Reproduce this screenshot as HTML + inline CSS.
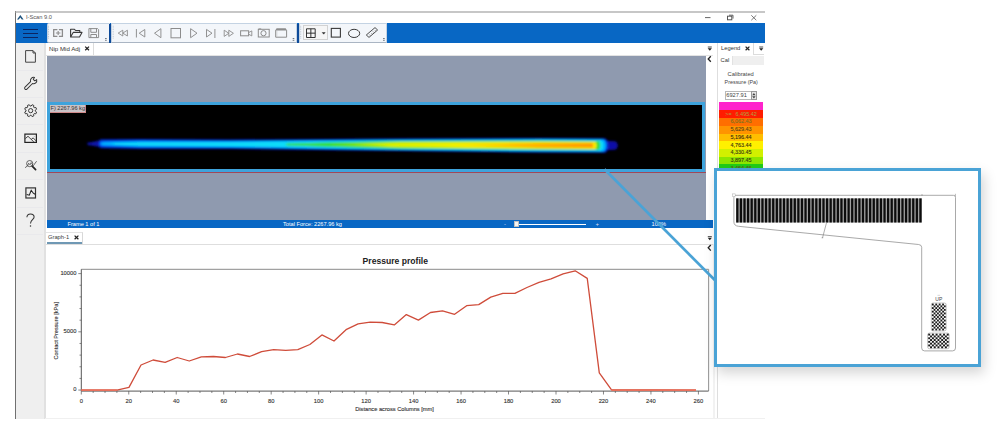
<!DOCTYPE html>
<html><head><meta charset="utf-8">
<style>
*{box-sizing:border-box;margin:0;padding:0}
html,body{width:1000px;height:437px;overflow:hidden;background:#fff}
body{position:relative;font-family:"Liberation Sans",sans-serif;color:#333}
.a{position:absolute}
.t{position:absolute;white-space:nowrap;line-height:1}
.k{-webkit-text-stroke:0.12px currentColor}
svg{position:absolute;overflow:visible}
</style></head><body>

<!-- window frame -->

<div class="a" style="left:15px;top:11px;width:1px;height:407.5px;background:#707070"></div>
<!-- title -->
<div class="t" style="left:26px;top:14.9px;font-size:5.7px;color:#555">I-Scan 9.0</div>
<!-- blue toolbar -->
<div class="a" style="left:16px;top:23px;width:749px;height:20px;background:#0867c4"></div>
<div class="a" style="left:23px;top:29px;width:14.5px;height:1.3px;background:#0b2460"></div>
<div class="a" style="left:23px;top:33px;width:14.5px;height:1.3px;background:#0b2460"></div>
<div class="a" style="left:23px;top:37px;width:14.5px;height:1.3px;background:#0b2460"></div>
<div class="a" style="left:46.5px;top:23px;width:63px;height:20px;background:#f3f6fa;border:1px solid #c4d3e3;border-bottom-color:#aab5c3;border-radius:2px 0 0 2px"></div>
<div class="a" style="left:111px;top:23px;width:186px;height:20px;background:#f3f6fa;border:1px solid #c4d3e3;border-bottom-color:#aab5c3"></div>
<div class="a" style="left:298.5px;top:23px;width:88px;height:20px;background:#f3f6fa;border:1px solid #c4d3e3;border-bottom-color:#aab5c3"></div>
<div class="a" style="left:303px;top:24.8px;width:24.5px;height:15.5px;background:#f6f6f6;border:1px solid #d2d2d2"></div>
<div class="a" style="left:109px;top:23.5px;width:2px;height:19px;background:#0c4a9a"></div>
<div class="a" style="left:297px;top:23.5px;width:2px;height:19px;background:#0c4a9a"></div>
<!-- left sidebar -->
<div class="a" style="left:16px;top:42.5px;width:28.5px;height:376px;background:#efefef"></div>
<div class="a" style="left:44px;top:42.5px;width:1.6px;height:376px;background:#e1e1e1"></div>
<div class="a" style="left:17px;top:69.7px;width:26px;height:1px;background:#e9e9ec"></div>
<div class="a" style="left:17px;top:97px;width:26px;height:1px;background:#e9e9ec"></div>
<div class="a" style="left:17px;top:124px;width:26px;height:1px;background:#e9e9ec"></div>
<div class="a" style="left:17px;top:152px;width:26px;height:1px;background:#e9e9ec"></div>
<div class="a" style="left:17px;top:179px;width:26px;height:1px;background:#e9e9ec"></div>
<div class="a" style="left:17px;top:207.4px;width:26px;height:1px;background:#e9e9ec"></div>
<div class="a" style="left:17px;top:233.8px;width:26px;height:1px;background:#e9e9ec"></div>

<div class="a" style="left:45.6px;top:42.5px;width:668px;height:13px;background:#fff"></div>
<div class="a" style="left:46px;top:54.8px;width:667px;height:1px;background:#e3e3e3"></div>
<div class="a" style="left:46px;top:43px;width:47.5px;height:12.3px;background:#fff;border-right:1px solid #dcdcdc"></div>
<div class="t" style="left:49px;top:45.5px;font-size:6.15px;color:#333">Nip Mid Adj</div>
<div class="a" style="left:46.6px;top:55.5px;width:659px;height:164px;background:#8f9aaf"></div>
<div class="a" style="left:47px;top:102px;width:657.5px;height:70.3px;border:3px solid #3ea3dc;background:#000"></div>
<div class="a" style="left:46.6px;top:172.3px;width:659px;height:0.8px;background:#a04858"></div>
<div class="a" style="left:50px;top:105.2px;width:36px;height:7.6px;background:#c9c2c6;border-bottom:1px solid #d08a8a;border-right:1px solid #d08a8a"></div>
<div class="t" style="left:50.5px;top:106.4px;font-size:5.6px;color:#333">F) 2267.96 kg</div>
<svg style="left:0;top:0" width="1000" height="437" viewBox="0 0 1000 437"><defs><filter id="bl" x="-5%" y="-100%" width="110%" height="300%"><feGaussianBlur stdDeviation="0.85"/></filter><linearGradient id="gG" x1="250" x2="600" y1="0" y2="0" gradientUnits="userSpaceOnUse"><stop offset="0" stop-color="#08dcf8"/><stop offset="0.2" stop-color="#40e8a0"/><stop offset="0.35" stop-color="#38e040"/><stop offset="1" stop-color="#30dc30"/></linearGradient><linearGradient id="gY" x1="335" x2="600" y1="0" y2="0" gradientUnits="userSpaceOnUse"><stop offset="0" stop-color="#60e030"/><stop offset="0.2" stop-color="#d8f000"/><stop offset="0.5" stop-color="#f4f000"/><stop offset="1" stop-color="#ffe800"/></linearGradient><linearGradient id="gO" x1="445" x2="600" y1="0" y2="0" gradientUnits="userSpaceOnUse"><stop offset="0" stop-color="#f4f000"/><stop offset="0.45" stop-color="#ffb800"/><stop offset="1" stop-color="#ff9400"/></linearGradient></defs><g filter="url(#bl)"><path d="M87.5 142.6 C92 142.2 97 141.5 101 139.6 L101 147.8 C97 146.2 92 145.6 87.5 145 Z" fill="#0a14a8"/><path d="M598.00 139.39 L606.00 140.82 L614.00 141.25 C619.00 141.25 619.00 149.85 614.00 149.85 L606.00 150.22 L598.00 151.59 C596.00 151.59 596.00 139.39 598.00 139.39Z" fill="#0c10a8"/><path d="M101.00 139.25 L140.00 138.88 L230.00 139.50 L400.00 138.50 L540.00 137.99 L604.00 138.21 C610.00 138.21 610.00 152.81 604.00 152.81 L540.00 152.59 L400.00 151.10 L230.00 148.90 L140.00 148.88 L101.00 148.25 C98.00 148.25 98.00 139.25 101.00 139.25Z" fill="#0a18b8"/><path d="M102.00 140.45 L140.00 140.08 L230.00 140.60 L400.00 139.30 L540.00 138.79 L603.00 139.01 C609.00 139.01 609.00 152.01 603.00 152.01 L540.00 151.79 L400.00 150.30 L230.00 147.80 L140.00 147.68 L102.00 147.05 C98.00 147.05 98.00 140.45 102.00 140.45Z" fill="#0050f0"/><path d="M105.00 142.26 L140.00 141.38 L230.00 141.50 L400.00 139.90 L540.00 139.29 L602.00 139.51 C607.00 139.51 607.00 151.51 602.00 151.51 L540.00 151.29 L400.00 149.70 L230.00 146.90 L140.00 146.38 L105.00 145.26 C99.00 145.26 99.00 142.26 105.00 142.26Z" fill="#00b8ff"/><path d="M118.00 143.11 L140.00 142.38 L230.00 142.30 L400.00 140.60 L540.00 139.99 L600.00 140.20 C604.00 140.20 604.00 150.80 600.00 150.80 L540.00 150.59 L400.00 149.00 L230.00 146.10 L140.00 145.38 L118.00 144.51 C110.00 144.51 110.00 143.11 118.00 143.11Z" fill="#10dcf8"/><path d="M290.00 143.41 L330.00 142.45 L400.00 140.90 L540.00 140.79 L598.00 140.99 C601.00 140.99 601.00 149.99 598.00 149.99 L540.00 149.79 L400.00 148.70 L330.00 146.65 L290.00 145.41 C284.00 145.41 284.00 143.41 290.00 143.41Z" fill="#38dc38"/><path d="M335.00 144.07 L400.00 142.30 L540.00 141.79 L595.00 141.98 C597.00 141.98 597.00 148.98 595.00 148.98 L540.00 148.79 L400.00 147.30 L335.00 145.07 C329.00 145.07 329.00 144.07 335.00 144.07Z" fill="url(#gY)"/><path d="M460.00 144.51 L540.00 143.19 L592.00 143.37 C593.50 143.37 593.50 147.57 592.00 147.57 L540.00 147.39 L460.00 145.51 C454.00 145.51 454.00 144.51 460.00 144.51Z" fill="url(#gO)"/></g></svg>

<div class="a" style="left:46.6px;top:219.5px;width:666px;height:8.5px;background:#0867c4"></div>
<div class="t" style="left:67.5px;top:221.8px;font-size:5.65px;color:#fff">Frame 1 of 1</div>
<div class="t" style="left:283px;top:221.8px;font-size:5.65px;color:#fff">Total Force: 2267.96 kg</div>
<div class="t" style="left:504px;top:220.5px;font-size:6px;color:#dde">-</div>
<div class="a" style="left:518px;top:223.5px;width:68px;height:1.4px;background:#fff"></div>
<div class="a" style="left:514px;top:220.6px;width:5px;height:6.5px;background:#f4f4f4;border:0.5px solid #c0c0c0"></div>
<div class="t" style="left:595.5px;top:220.5px;font-size:6px;color:#dde">+</div>
<div class="t" style="left:651.5px;top:221.8px;font-size:5.65px;color:#fff">100%</div>

<div class="a" style="left:46px;top:232px;width:36.5px;height:12px;background:#fff;border-right:1px solid #d8d8d8;border-top:1px solid #e4e4e4"></div>
<div class="a" style="left:46px;top:243.6px;width:667px;height:0.8px;background:#dedede"></div>
<div class="a" style="left:46.5px;top:242px;width:35.5px;height:1.6px;background:#6f98b4"></div>
<div class="t" style="left:48px;top:234.9px;font-size:5.75px;color:#3a3a3a">Graph-1</div>

<div class="a" style="left:713px;top:244px;width:1.5px;height:174.5px;background:#f2f2f2"></div>
<div class="a" style="left:716.5px;top:42.5px;width:1.2px;height:376px;background:#dedede"></div>
<div class="a" style="left:45px;top:418px;width:720px;height:1px;background:#f0f0f0"></div>
<div class="a" style="left:718px;top:43px;width:36px;height:12px;background:#fff;border-right:1px solid #dcdcdc"></div>
<div class="t" style="left:721px;top:45.5px;font-size:5.8px;color:#333">Legend</div>
<div class="a" style="left:732px;top:56px;width:32px;height:9px;background:#efefef;border-left:1px solid #e2e2e2"></div>
<div class="a" style="left:753px;top:54px;width:11px;height:1px;background:#dcdcdc"></div>
<div class="t" style="left:720.5px;top:57.5px;font-size:5.8px;color:#333">Cal</div>
<div class="t" style="left:727.6px;top:72.4px;font-size:5.75px;color:#444">Calibrated</div>
<div class="t" style="left:724.6px;top:80.4px;font-size:5.4px;color:#444">Pressure (Pa)</div>
<div class="a" style="left:724.8px;top:91px;width:32.5px;height:9.3px;background:#fff;border:0.8px solid #b8b8b8"></div>
<div class="t" style="left:726.3px;top:92.8px;font-size:5.7px;color:#444">6927.91</div>
<div class="a" style="left:750.8px;top:91.4px;width:6.2px;height:8.6px;background:#e4e4e4;border:0.7px solid #999"></div>
<div class="a" style="left:719px;top:102.40px;width:44px;height:7.85px;background:#ff24cc"></div>
<div class="a" style="left:719px;top:110.20px;width:44px;height:7.65px;background:#ff1c00"></div>
<div class="a" style="left:719px;top:117.80px;width:44px;height:7.95px;background:#ff6e00"></div>
<div class="t k" style="left:719px;width:44px;text-align:center;top:119.15px;font-size:5.45px;color:#7a7420">6,062.43</div>
<div class="a" style="left:719px;top:125.70px;width:44px;height:7.95px;background:#ff9400"></div>
<div class="t k" style="left:719px;width:44px;text-align:center;top:127.05px;font-size:5.45px;color:#5a4418">5,629.43</div>
<div class="a" style="left:719px;top:133.60px;width:44px;height:7.85px;background:#ffbe00"></div>
<div class="t k" style="left:719px;width:44px;text-align:center;top:134.90px;font-size:5.45px;color:#3e3010">5,196.44</div>
<div class="a" style="left:719px;top:141.40px;width:44px;height:7.55px;background:#fff000"></div>
<div class="t k" style="left:719px;width:44px;text-align:center;top:142.55px;font-size:5.45px;color:#3a3410">4,763.44</div>
<div class="a" style="left:719px;top:148.90px;width:44px;height:7.95px;background:#d2f000"></div>
<div class="t k" style="left:719px;width:44px;text-align:center;top:150.25px;font-size:5.45px;color:#3a3a10">4,330.45</div>
<div class="a" style="left:719px;top:156.80px;width:44px;height:7.65px;background:#8ee600"></div>
<div class="t k" style="left:719px;width:44px;text-align:center;top:158.00px;font-size:5.45px;color:#3a3a10">3,897.45</div>
<div class="a" style="left:719px;top:164.40px;width:44px;height:7.85px;background:#20cc18"></div>
<div class="t k" style="left:719px;width:44px;text-align:center;top:165.70px;font-size:5.45px;color:#6a5020">3,464.46</div>
<div class="t" style="left:725.3px;top:112px;font-size:5.45px;color:#b0a040">&gt;=</div>
<div class="t" style="left:735.6px;top:112px;font-size:5.45px;color:#b0a040">6,495.42</div>
<svg style="left:0;top:0" width="1000" height="437" viewBox="0 0 1000 437"><rect x="15" y="11.4" width="750" height="1.2" fill="#a2a2a2"/><path d="M17 19.6 L20.3 15 L23.6 19.6 L21.8 19.6 L20.3 17.5 L18.8 19.6Z" fill="#1d527d"/><path d="M705 17.6 H710.5" stroke="#555" stroke-width="0.9"/><rect x="727.5" y="16.2" width="4.3" height="3.6" fill="none" stroke="#555" stroke-width="1"/><path d="M729 15.2 H733 V18.6" fill="none" stroke="#555" stroke-width="0.9"/><path d="M751.3 15.3 L756.3 20.2 M756.3 15.3 L751.3 20.2" stroke="#555" stroke-width="0.8"/><path d="M48.5 25.8 V38.8" stroke="#9aa6b4" stroke-width="0.7" stroke-dasharray="0.8 0.9"/><path d="M113.2 25.8 V38.8" stroke="#9aa6b4" stroke-width="0.7" stroke-dasharray="0.8 0.9"/><path d="M300.7 25.8 V38.8" stroke="#9aa6b4" stroke-width="0.7" stroke-dasharray="0.8 0.9"/><path d="M105.1 38.5 h1.6 M105.1 40.3 h1.6" stroke="#5a6472" stroke-width="0.9"/><path d="M292.7 38.5 h1.6 M292.7 40.3 h1.6" stroke="#5a6472" stroke-width="0.9"/><path d="M383.1 38.5 h1.6 M383.1 40.3 h1.6" stroke="#5a6472" stroke-width="0.9"/><path d="M57.4 29.7 H53.7 V36.3 H57.4 M58.9 29.7 H62.4 V36.3 H58.9" stroke="#8c8c8c" stroke-width="1.3" fill="none"/><path d="M55.9 33 H60.4 M58.15 30.9 V35.1" stroke="#8c8c8c" stroke-width="1.1" fill="none"/><path d="M70.6 37 V29.3 H74.5 L75.6 30.5 H79.8 V32.3 M70.6 37 L73.2 32.4 H82 L79.5 37 Z" fill="none" stroke="#3a3a3a" stroke-width="1.1" stroke-linejoin="round"/><path d="M88.9 28.6 H97.6 L98.6 29.6 V37.6 H88.9 Z M90.8 28.6 V32.3 H96.5 V28.6 M90.8 37.6 V34.5 H96.5 V37.6" fill="none" stroke="#8c8c8c" stroke-width="1"/><path d="M118.2 33.1 L122.8 30.2 V36 Z M122.8 33.1 L127.4 30.2 V36 Z" fill="none" stroke="#8c8c8c" stroke-width="0.9" stroke-linejoin="round"/><path d="M136.4 29 V37.5 M144.8 29.5 L139.2 33.2 L144.8 37 Z" fill="none" stroke="#8c8c8c" stroke-width="0.95"/><path d="M160.9 28.7 L154.5 33.2 L160.9 37.7 Z" fill="none" stroke="#8c8c8c" stroke-width="0.95"/><rect x="171" y="28.5" width="9.5" height="9.3" fill="none" stroke="#8c8c8c" stroke-width="1"/><path d="M190.6 28.7 L197 33.2 L190.6 37.7 Z" fill="none" stroke="#8c8c8c" stroke-width="0.95"/><path d="M206.5 29.4 L212 33.2 L206.5 37 Z M214.9 29 V38" fill="none" stroke="#8c8c8c" stroke-width="0.95"/><path d="M224.2 30.2 L228.8 33.3 L224.2 36.4 Z M228.8 30.2 L233.4 33.3 L228.8 36.4 Z" fill="none" stroke="#8c8c8c" stroke-width="0.9" stroke-linejoin="round"/><rect x="240.6" y="30.8" width="8" height="5" fill="none" stroke="#8c8c8c" stroke-width="1"/><path d="M248.6 32.6 L251.8 30.9 V35.9 L248.6 34.2" fill="none" stroke="#8c8c8c" stroke-width="0.9"/><rect x="258.3" y="29.3" width="10.9" height="7.7" fill="none" stroke="#8c8c8c" stroke-width="1"/><circle cx="263.5" cy="33.2" r="2.6" fill="none" stroke="#8c8c8c" stroke-width="1"/><path d="M258.6 28.8 H261.2" stroke="#8c8c8c" stroke-width="0.8"/><path d="M275.7 37.2 V30.2 M286.6 37.2 V30.2 M275.7 37.2 H286.6" fill="none" stroke="#8c8c8c" stroke-width="1"/><path d="M275.2 30.6 L276.6 28.2 H285.6 L287.1 30.6 Z" fill="#8c8c8c"/><path d="M276.9 31 V36.6" stroke="#c8c8c8" stroke-width="0.6"/><path d="M306.5 28.8 H315.2 V37.5 H306.5 Z M310.85 28.8 V37.5 M306.5 33.15 H315.2" fill="none" stroke="#2a2a2a" stroke-width="0.95"/><path d="M322.2 32.5 L323.7 34.2 L325.2 32.5 Z" fill="#222" stroke="#222" stroke-width="0.4" stroke-linejoin="round"/><rect x="331.3" y="28.4" width="9.1" height="8.7" fill="none" stroke="#3a3a3a" stroke-width="1.1"/><ellipse cx="354.1" cy="33.4" rx="5.6" ry="4.1" fill="none" stroke="#3a3a3a" stroke-width="1"/><path d="M366.3 35 L375 27.6 L377.6 30 L369 37.4 Z" fill="none" stroke="#3a3a3a" stroke-width="0.9" stroke-linejoin="round"/><path d="M369.4 34.6 l0.9 1 M371.3 33 l0.6 0.7 M373 31.5 l0.9 1 M374.8 30 l0.6 0.7" stroke="#3a3a3a" stroke-width="0.6"/><path d="M25.6 50.6 H33 L35.4 53 V62.2 H25.6 Z M33 50.6 V53 H35.4" fill="none" stroke="#444" stroke-width="1"/><g transform="translate(33.6,80.5) rotate(-45)"><path d="M-10.8 -1.35 L-2.9 -1.35 A3.25 3.25 0 0 1 2.85 -1.5 L0.6 -1.1 L0.6 1.1 L2.85 1.5 A3.25 3.25 0 0 1 -2.9 1.35 L-10.8 1.35 A1.35 1.35 0 0 1 -10.8 -1.35 Z" fill="none" stroke="#333" stroke-width="0.95" stroke-linejoin="round"/></g><path d="M35.23 111.09 L36.58 112.07 L35.85 113.84 L34.20 113.58 L33.58 114.20 L33.84 115.85 L32.07 116.58 L31.09 115.23 L30.21 115.23 L29.23 116.58 L27.46 115.85 L27.72 114.20 L27.10 113.58 L25.45 113.84 L24.72 112.07 L26.07 111.09 L26.07 110.21 L24.72 109.23 L25.45 107.46 L27.10 107.72 L27.72 107.10 L27.46 105.45 L29.23 104.72 L30.21 106.07 L31.09 106.07 L32.07 104.72 L33.84 105.45 L33.58 107.10 L34.20 107.72 L35.85 107.46 L36.58 109.23 L35.23 110.21Z" fill="none" stroke="#333" stroke-width="0.95" stroke-linejoin="round"/><circle cx="30.65" cy="110.65" r="2.1" fill="none" stroke="#333" stroke-width="0.95"/><rect x="24.9" y="134.1" width="11.5" height="8.3" fill="none" stroke="#222" stroke-width="1.2"/><path d="M25.3 138.6 L28 136.3 L33.8 141.9 M31.2 139.4 L33.2 137.9 L36.1 140.9" fill="none" stroke="#333" stroke-width="0.9"/><circle cx="34.2" cy="136.3" r="0.4" fill="#666"/><circle cx="29.7" cy="163.6" r="3.1" fill="none" stroke="#555" stroke-width="0.9"/><path d="M32.2 166.2 L35.6 169.6" stroke="#222" stroke-width="1.7" stroke-linecap="round"/><path d="M25.1 167.7 L27.6 165.8 L28.6 163.2 L30 164.8 L31.2 162.6 L33.3 165.7 L36.6 161.2" fill="none" stroke="#444" stroke-width="0.8"/><rect x="25.9" y="187.9" width="9.6" height="10.1" fill="none" stroke="#333" stroke-width="1.2"/><path d="M26.7 194.4 L29.3 195.2 L31.2 190.3 L33.3 193.2 L35.2 194.3" fill="none" stroke="#222" stroke-width="1.05"/><path d="M26.9 217.3 C27 215 28.5 214 30.5 214 C32.6 214 34.1 215.2 34.1 217.1 C34.1 219.6 30.5 220 30.5 223.4" fill="none" stroke="#333" stroke-width="1.05"/><circle cx="30.5" cy="226" r="0.75" fill="#333"/><path d="M85.2 46.6 l3.8 3.6 M89.0 46.6 l-3.8 3.6" stroke="#222" stroke-width="1.25"/><path d="M74.6 235.6 l3.8 3.6 M78.39999999999999 235.6 l-3.8 3.6" stroke="#222" stroke-width="1.25"/><path d="M745.6 46.6 l3.8 3.6 M749.4 46.6 l-3.8 3.6" stroke="#222" stroke-width="1.25"/><path d="M707.8 47.0 h4" stroke="#222" stroke-width="0.8"/><path d="M707.6999999999999 48.2 L711.9 48.2 L709.8 50.7Z" fill="#222"/><path d="M759.2 47.0 h4" stroke="#222" stroke-width="0.8"/><path d="M759.1 48.2 L763.3000000000001 48.2 L761.2 50.7Z" fill="#222"/><path d="M707.8 236.6 h4" stroke="#222" stroke-width="0.8"/><path d="M707.6999999999999 237.79999999999998 L711.9 237.79999999999998 L709.8 240.29999999999998Z" fill="#222"/><path d="M710.8 56.2 L708.1999999999999 59.0 L710.8 61.8" fill="none" stroke="#222" stroke-width="1.3"/><path d="M710.8 245.0 L708.1999999999999 247.8 L710.8 250.60000000000002" fill="none" stroke="#222" stroke-width="1.3"/><path d="M752.2 95.2 L753.9 93 L755.6 95.2Z M752.2 96.2 L753.9 98.4 L755.6 96.2Z" fill="#444"/><path d="M81.3 269.3 H708.6" stroke="#8a8a8a" stroke-width="1" fill="none"/><path d="M708.6 269.3 V391.1" stroke="#9a9a9a" stroke-width="1.1" fill="none"/><path d="M81.3 269.3 V391.1 M81.3 391.1 H708.6" stroke="#444" stroke-width="0.9"/><path d="M78.30 390.05 H81.3" stroke="#555" stroke-width="0.7"/><path d="M79.50 378.41 H81.3" stroke="#555" stroke-width="0.7"/><path d="M79.50 366.76 H81.3" stroke="#555" stroke-width="0.7"/><path d="M79.50 355.12 H81.3" stroke="#555" stroke-width="0.7"/><path d="M79.50 343.47 H81.3" stroke="#555" stroke-width="0.7"/><path d="M78.30 331.82 H81.3" stroke="#555" stroke-width="0.7"/><path d="M79.50 320.18 H81.3" stroke="#555" stroke-width="0.7"/><path d="M79.50 308.54 H81.3" stroke="#555" stroke-width="0.7"/><path d="M79.50 296.89 H81.3" stroke="#555" stroke-width="0.7"/><path d="M79.50 285.25 H81.3" stroke="#555" stroke-width="0.7"/><path d="M78.30 273.60 H81.3" stroke="#555" stroke-width="0.7"/><path d="M81.30 391.1 V394.50" stroke="#555" stroke-width="0.7"/><path d="M93.17 391.1 V393.00" stroke="#555" stroke-width="0.7"/><path d="M105.03 391.1 V393.00" stroke="#555" stroke-width="0.7"/><path d="M116.90 391.1 V393.00" stroke="#555" stroke-width="0.7"/><path d="M128.77 391.1 V394.50" stroke="#555" stroke-width="0.7"/><path d="M140.64 391.1 V393.00" stroke="#555" stroke-width="0.7"/><path d="M152.50 391.1 V393.00" stroke="#555" stroke-width="0.7"/><path d="M164.37 391.1 V393.00" stroke="#555" stroke-width="0.7"/><path d="M176.24 391.1 V394.50" stroke="#555" stroke-width="0.7"/><path d="M188.11 391.1 V393.00" stroke="#555" stroke-width="0.7"/><path d="M199.97 391.1 V393.00" stroke="#555" stroke-width="0.7"/><path d="M211.84 391.1 V393.00" stroke="#555" stroke-width="0.7"/><path d="M223.71 391.1 V394.50" stroke="#555" stroke-width="0.7"/><path d="M235.58 391.1 V393.00" stroke="#555" stroke-width="0.7"/><path d="M247.44 391.1 V393.00" stroke="#555" stroke-width="0.7"/><path d="M259.31 391.1 V393.00" stroke="#555" stroke-width="0.7"/><path d="M271.18 391.1 V394.50" stroke="#555" stroke-width="0.7"/><path d="M283.05 391.1 V393.00" stroke="#555" stroke-width="0.7"/><path d="M294.92 391.1 V393.00" stroke="#555" stroke-width="0.7"/><path d="M306.78 391.1 V393.00" stroke="#555" stroke-width="0.7"/><path d="M318.65 391.1 V394.50" stroke="#555" stroke-width="0.7"/><path d="M330.52 391.1 V393.00" stroke="#555" stroke-width="0.7"/><path d="M342.38 391.1 V393.00" stroke="#555" stroke-width="0.7"/><path d="M354.25 391.1 V393.00" stroke="#555" stroke-width="0.7"/><path d="M366.12 391.1 V394.50" stroke="#555" stroke-width="0.7"/><path d="M377.99 391.1 V393.00" stroke="#555" stroke-width="0.7"/><path d="M389.86 391.1 V393.00" stroke="#555" stroke-width="0.7"/><path d="M401.72 391.1 V393.00" stroke="#555" stroke-width="0.7"/><path d="M413.59 391.1 V394.50" stroke="#555" stroke-width="0.7"/><path d="M425.46 391.1 V393.00" stroke="#555" stroke-width="0.7"/><path d="M437.32 391.1 V393.00" stroke="#555" stroke-width="0.7"/><path d="M449.19 391.1 V393.00" stroke="#555" stroke-width="0.7"/><path d="M461.06 391.1 V394.50" stroke="#555" stroke-width="0.7"/><path d="M472.93 391.1 V393.00" stroke="#555" stroke-width="0.7"/><path d="M484.80 391.1 V393.00" stroke="#555" stroke-width="0.7"/><path d="M496.66 391.1 V393.00" stroke="#555" stroke-width="0.7"/><path d="M508.53 391.1 V394.50" stroke="#555" stroke-width="0.7"/><path d="M520.40 391.1 V393.00" stroke="#555" stroke-width="0.7"/><path d="M532.26 391.1 V393.00" stroke="#555" stroke-width="0.7"/><path d="M544.13 391.1 V393.00" stroke="#555" stroke-width="0.7"/><path d="M556.00 391.1 V394.50" stroke="#555" stroke-width="0.7"/><path d="M567.87 391.1 V393.00" stroke="#555" stroke-width="0.7"/><path d="M579.74 391.1 V393.00" stroke="#555" stroke-width="0.7"/><path d="M591.60 391.1 V393.00" stroke="#555" stroke-width="0.7"/><path d="M603.47 391.1 V394.50" stroke="#555" stroke-width="0.7"/><path d="M615.34 391.1 V393.00" stroke="#555" stroke-width="0.7"/><path d="M627.20 391.1 V393.00" stroke="#555" stroke-width="0.7"/><path d="M639.07 391.1 V393.00" stroke="#555" stroke-width="0.7"/><path d="M650.94 391.1 V394.50" stroke="#555" stroke-width="0.7"/><path d="M662.81 391.1 V393.00" stroke="#555" stroke-width="0.7"/><path d="M674.67 391.1 V393.00" stroke="#555" stroke-width="0.7"/><path d="M686.54 391.1 V393.00" stroke="#555" stroke-width="0.7"/><path d="M698.41 391.1 V394.50" stroke="#555" stroke-width="0.7"/><path d="M81.30 390.05 L116.90 390.05 L128.96 387.40 L141.02 365.00 L153.08 360.00 L165.14 362.30 L177.20 357.50 L189.26 361.00 L201.32 356.80 L213.38 356.50 L225.44 357.50 L237.50 354.00 L249.56 356.50 L261.62 351.70 L273.68 349.60 L285.74 350.30 L297.80 349.60 L309.86 344.50 L321.92 334.90 L333.98 341.00 L346.04 329.70 L358.10 323.90 L370.16 322.20 L382.22 322.50 L394.28 324.90 L406.34 314.60 L418.40 320.10 L430.46 312.50 L442.52 310.80 L454.58 314.30 L466.64 305.70 L478.70 304.60 L490.76 297.10 L502.82 293.30 L514.88 293.30 L526.94 287.50 L539.00 282.30 L551.06 278.90 L563.12 273.80 L575.18 270.80 L587.24 278.40 L599.30 372.90 L611.36 389.70 L696.00 390.05" fill="none" stroke="#cf4c3a" stroke-width="1.3" stroke-linejoin="round"/><path d="M81.3 390.1 H116.9 M611.4 390.1 H696" stroke="#e8705c" stroke-width="1.9"/></svg>
<div class="t" style="left:362.6px;top:257px;font-size:8.6px;font-weight:bold;color:#222">Pressure profile</div>
<div class="t k" style="left:40px;width:36.5px;text-align:right;top:387.45px;font-size:5.8px;color:#333">0</div>
<div class="t k" style="left:40px;width:36.5px;text-align:right;top:329.22px;font-size:5.8px;color:#333">5000</div>
<div class="t k" style="left:40px;width:36.5px;text-align:right;top:271.00px;font-size:5.8px;color:#333">10000</div>
<div class="t k" style="left:66.30px;width:30px;text-align:center;top:398.8px;font-size:5.8px;color:#333">0</div>
<div class="t k" style="left:113.77px;width:30px;text-align:center;top:398.8px;font-size:5.8px;color:#333">20</div>
<div class="t k" style="left:161.24px;width:30px;text-align:center;top:398.8px;font-size:5.8px;color:#333">40</div>
<div class="t k" style="left:208.71px;width:30px;text-align:center;top:398.8px;font-size:5.8px;color:#333">60</div>
<div class="t k" style="left:256.18px;width:30px;text-align:center;top:398.8px;font-size:5.8px;color:#333">80</div>
<div class="t k" style="left:303.65px;width:30px;text-align:center;top:398.8px;font-size:5.8px;color:#333">100</div>
<div class="t k" style="left:351.12px;width:30px;text-align:center;top:398.8px;font-size:5.8px;color:#333">120</div>
<div class="t k" style="left:398.59px;width:30px;text-align:center;top:398.8px;font-size:5.8px;color:#333">140</div>
<div class="t k" style="left:446.06px;width:30px;text-align:center;top:398.8px;font-size:5.8px;color:#333">160</div>
<div class="t k" style="left:493.53px;width:30px;text-align:center;top:398.8px;font-size:5.8px;color:#333">180</div>
<div class="t k" style="left:541.00px;width:30px;text-align:center;top:398.8px;font-size:5.8px;color:#333">200</div>
<div class="t k" style="left:588.47px;width:30px;text-align:center;top:398.8px;font-size:5.8px;color:#333">220</div>
<div class="t k" style="left:635.94px;width:30px;text-align:center;top:398.8px;font-size:5.8px;color:#333">240</div>
<div class="t k" style="left:683.41px;width:30px;text-align:center;top:398.8px;font-size:5.8px;color:#333">260</div>
<div class="t k" style="left:355.2px;top:406.7px;font-size:5.7px;color:#333">Distance across Columns [mm]</div>
<div class="t k" style="left:28px;top:327.5px;width:58px;text-align:center;font-size:5.6px;color:#333;transform:rotate(-90deg);transform-origin:29px 2.8px">Contact Pressure [kPa]</div>
<svg style="left:0;top:0" width="1000" height="437" viewBox="0 0 1000 437"><path d="M604.5 169.3 L715 280.3" stroke="#4aa3d6" stroke-width="2.7"/></svg>
<div class="a" style="left:714px;top:168px;width:267px;height:198.5px;background:#fff;border:3px solid #4aa3d6;box-shadow:3px 6px 12px rgba(0,0,0,0.17)"></div>
<svg style="left:0;top:0" width="1000" height="437" viewBox="0 0 1000 437"><path d="M736 195.3 H953.4 Q955.5 195.3 955.5 197.4 V348 Q955.5 350.9 952.6 350.9 H924.6 Q921.7 350.9 921.7 348 V247.3 Q921.7 244.8 918.6 244.5 L738.5 226.3 Q733.9 225.8 733.9 222 V197.4 Q733.9 195.3 736 195.3 Z" fill="none" stroke="#8c8c8c" stroke-width="0.75"/><rect x="732.6" y="193.9" width="2.6" height="2.6" fill="#fff" stroke="#aaa" stroke-width="0.5"/><path d="M922 194 V196 M955.4 193.8 V196.5" stroke="#888" stroke-width="0.6"/><rect x="736.2" y="198.4" width="185.8" height="24.1" fill="#a0a0a0"/><rect x="736.20" y="198.4" width="2.25" height="24.1" fill="#0c0c0c"/><rect x="739.79" y="198.4" width="2.25" height="24.1" fill="#0c0c0c"/><rect x="743.38" y="198.4" width="2.25" height="24.1" fill="#0c0c0c"/><rect x="746.97" y="198.4" width="2.25" height="24.1" fill="#0c0c0c"/><rect x="750.56" y="198.4" width="2.25" height="24.1" fill="#0c0c0c"/><rect x="754.15" y="198.4" width="2.25" height="24.1" fill="#0c0c0c"/><rect x="757.74" y="198.4" width="2.25" height="24.1" fill="#0c0c0c"/><rect x="761.33" y="198.4" width="2.25" height="24.1" fill="#0c0c0c"/><rect x="764.92" y="198.4" width="2.25" height="24.1" fill="#0c0c0c"/><rect x="768.51" y="198.4" width="2.25" height="24.1" fill="#0c0c0c"/><rect x="772.10" y="198.4" width="2.25" height="24.1" fill="#0c0c0c"/><rect x="775.69" y="198.4" width="2.25" height="24.1" fill="#0c0c0c"/><rect x="779.28" y="198.4" width="2.25" height="24.1" fill="#0c0c0c"/><rect x="782.88" y="198.4" width="2.25" height="24.1" fill="#0c0c0c"/><rect x="786.47" y="198.4" width="2.25" height="24.1" fill="#0c0c0c"/><rect x="790.06" y="198.4" width="2.25" height="24.1" fill="#0c0c0c"/><rect x="793.65" y="198.4" width="2.25" height="24.1" fill="#0c0c0c"/><rect x="797.24" y="198.4" width="2.25" height="24.1" fill="#0c0c0c"/><rect x="800.83" y="198.4" width="2.25" height="24.1" fill="#0c0c0c"/><rect x="804.42" y="198.4" width="2.25" height="24.1" fill="#0c0c0c"/><rect x="808.01" y="198.4" width="2.25" height="24.1" fill="#0c0c0c"/><rect x="811.60" y="198.4" width="2.25" height="24.1" fill="#0c0c0c"/><rect x="815.19" y="198.4" width="2.25" height="24.1" fill="#0c0c0c"/><rect x="818.78" y="198.4" width="2.25" height="24.1" fill="#0c0c0c"/><rect x="822.37" y="198.4" width="2.25" height="24.1" fill="#0c0c0c"/><rect x="825.96" y="198.4" width="2.25" height="24.1" fill="#0c0c0c"/><rect x="829.55" y="198.4" width="2.25" height="24.1" fill="#0c0c0c"/><rect x="833.14" y="198.4" width="2.25" height="24.1" fill="#0c0c0c"/><rect x="836.73" y="198.4" width="2.25" height="24.1" fill="#0c0c0c"/><rect x="840.32" y="198.4" width="2.25" height="24.1" fill="#0c0c0c"/><rect x="843.91" y="198.4" width="2.25" height="24.1" fill="#0c0c0c"/><rect x="847.50" y="198.4" width="2.25" height="24.1" fill="#0c0c0c"/><rect x="851.09" y="198.4" width="2.25" height="24.1" fill="#0c0c0c"/><rect x="854.68" y="198.4" width="2.25" height="24.1" fill="#0c0c0c"/><rect x="858.27" y="198.4" width="2.25" height="24.1" fill="#0c0c0c"/><rect x="861.86" y="198.4" width="2.25" height="24.1" fill="#0c0c0c"/><rect x="865.45" y="198.4" width="2.25" height="24.1" fill="#0c0c0c"/><rect x="869.04" y="198.4" width="2.25" height="24.1" fill="#0c0c0c"/><rect x="872.63" y="198.4" width="2.25" height="24.1" fill="#0c0c0c"/><rect x="876.23" y="198.4" width="2.25" height="24.1" fill="#0c0c0c"/><rect x="879.82" y="198.4" width="2.25" height="24.1" fill="#0c0c0c"/><rect x="883.41" y="198.4" width="2.25" height="24.1" fill="#0c0c0c"/><rect x="887.00" y="198.4" width="2.25" height="24.1" fill="#0c0c0c"/><rect x="890.59" y="198.4" width="2.25" height="24.1" fill="#0c0c0c"/><rect x="894.18" y="198.4" width="2.25" height="24.1" fill="#0c0c0c"/><rect x="897.77" y="198.4" width="2.25" height="24.1" fill="#0c0c0c"/><rect x="901.36" y="198.4" width="2.25" height="24.1" fill="#0c0c0c"/><rect x="904.95" y="198.4" width="2.25" height="24.1" fill="#0c0c0c"/><rect x="908.54" y="198.4" width="2.25" height="24.1" fill="#0c0c0c"/><rect x="912.13" y="198.4" width="2.25" height="24.1" fill="#0c0c0c"/><rect x="915.72" y="198.4" width="2.25" height="24.1" fill="#0c0c0c"/><rect x="919.31" y="198.4" width="2.25" height="24.1" fill="#0c0c0c"/><path d="M826.6 222.4 L822.5 237.9" stroke="#777" stroke-width="0.6"/><path d="M821.6 237.8 h1.6" stroke="#777" stroke-width="0.6"/><rect x="931.3" y="303.0" width="14.9" height="27.9" rx="1.8" fill="#fff" stroke="#888" stroke-width="0.5"/><rect x="931.90" y="303.60" width="1.80" height="1.87" fill="#1a1a1a"/><rect x="931.90" y="307.16" width="1.80" height="1.87" fill="#1a1a1a"/><rect x="931.90" y="310.72" width="1.80" height="1.87" fill="#1a1a1a"/><rect x="931.90" y="314.28" width="1.80" height="1.87" fill="#1a1a1a"/><rect x="931.90" y="317.84" width="1.80" height="1.87" fill="#1a1a1a"/><rect x="931.90" y="321.40" width="1.80" height="1.87" fill="#1a1a1a"/><rect x="931.90" y="324.96" width="1.80" height="1.87" fill="#1a1a1a"/><rect x="931.90" y="328.52" width="1.80" height="1.87" fill="#1a1a1a"/><rect x="933.61" y="305.38" width="1.80" height="1.87" fill="#1a1a1a"/><rect x="933.61" y="308.94" width="1.80" height="1.87" fill="#1a1a1a"/><rect x="933.61" y="312.50" width="1.80" height="1.87" fill="#1a1a1a"/><rect x="933.61" y="316.06" width="1.80" height="1.87" fill="#1a1a1a"/><rect x="933.61" y="319.62" width="1.80" height="1.87" fill="#1a1a1a"/><rect x="933.61" y="323.18" width="1.80" height="1.87" fill="#1a1a1a"/><rect x="933.61" y="326.74" width="1.80" height="1.87" fill="#1a1a1a"/><rect x="935.32" y="303.60" width="1.80" height="1.87" fill="#1a1a1a"/><rect x="935.32" y="307.16" width="1.80" height="1.87" fill="#1a1a1a"/><rect x="935.32" y="310.72" width="1.80" height="1.87" fill="#1a1a1a"/><rect x="935.32" y="314.28" width="1.80" height="1.87" fill="#1a1a1a"/><rect x="935.32" y="317.84" width="1.80" height="1.87" fill="#1a1a1a"/><rect x="935.32" y="321.40" width="1.80" height="1.87" fill="#1a1a1a"/><rect x="935.32" y="324.96" width="1.80" height="1.87" fill="#1a1a1a"/><rect x="935.32" y="328.52" width="1.80" height="1.87" fill="#1a1a1a"/><rect x="937.04" y="305.38" width="1.80" height="1.87" fill="#1a1a1a"/><rect x="937.04" y="308.94" width="1.80" height="1.87" fill="#1a1a1a"/><rect x="937.04" y="312.50" width="1.80" height="1.87" fill="#1a1a1a"/><rect x="937.04" y="316.06" width="1.80" height="1.87" fill="#1a1a1a"/><rect x="937.04" y="319.62" width="1.80" height="1.87" fill="#1a1a1a"/><rect x="937.04" y="323.18" width="1.80" height="1.87" fill="#1a1a1a"/><rect x="937.04" y="326.74" width="1.80" height="1.87" fill="#1a1a1a"/><rect x="938.75" y="303.60" width="1.80" height="1.87" fill="#1a1a1a"/><rect x="938.75" y="307.16" width="1.80" height="1.87" fill="#1a1a1a"/><rect x="938.75" y="310.72" width="1.80" height="1.87" fill="#1a1a1a"/><rect x="938.75" y="314.28" width="1.80" height="1.87" fill="#1a1a1a"/><rect x="938.75" y="317.84" width="1.80" height="1.87" fill="#1a1a1a"/><rect x="938.75" y="321.40" width="1.80" height="1.87" fill="#1a1a1a"/><rect x="938.75" y="324.96" width="1.80" height="1.87" fill="#1a1a1a"/><rect x="938.75" y="328.52" width="1.80" height="1.87" fill="#1a1a1a"/><rect x="940.46" y="305.38" width="1.80" height="1.87" fill="#1a1a1a"/><rect x="940.46" y="308.94" width="1.80" height="1.87" fill="#1a1a1a"/><rect x="940.46" y="312.50" width="1.80" height="1.87" fill="#1a1a1a"/><rect x="940.46" y="316.06" width="1.80" height="1.87" fill="#1a1a1a"/><rect x="940.46" y="319.62" width="1.80" height="1.87" fill="#1a1a1a"/><rect x="940.46" y="323.18" width="1.80" height="1.87" fill="#1a1a1a"/><rect x="940.46" y="326.74" width="1.80" height="1.87" fill="#1a1a1a"/><rect x="942.17" y="303.60" width="1.80" height="1.87" fill="#1a1a1a"/><rect x="942.17" y="307.16" width="1.80" height="1.87" fill="#1a1a1a"/><rect x="942.17" y="310.72" width="1.80" height="1.87" fill="#1a1a1a"/><rect x="942.17" y="314.28" width="1.80" height="1.87" fill="#1a1a1a"/><rect x="942.17" y="317.84" width="1.80" height="1.87" fill="#1a1a1a"/><rect x="942.17" y="321.40" width="1.80" height="1.87" fill="#1a1a1a"/><rect x="942.17" y="324.96" width="1.80" height="1.87" fill="#1a1a1a"/><rect x="942.17" y="328.52" width="1.80" height="1.87" fill="#1a1a1a"/><rect x="943.89" y="305.38" width="1.80" height="1.87" fill="#1a1a1a"/><rect x="943.89" y="308.94" width="1.80" height="1.87" fill="#1a1a1a"/><rect x="943.89" y="312.50" width="1.80" height="1.87" fill="#1a1a1a"/><rect x="943.89" y="316.06" width="1.80" height="1.87" fill="#1a1a1a"/><rect x="943.89" y="319.62" width="1.80" height="1.87" fill="#1a1a1a"/><rect x="943.89" y="323.18" width="1.80" height="1.87" fill="#1a1a1a"/><rect x="943.89" y="326.74" width="1.80" height="1.87" fill="#1a1a1a"/><rect x="927.6" y="333.1" width="21.6" height="15.6" rx="1.8" fill="#fff" stroke="#888" stroke-width="0.5"/><rect x="928.20" y="333.70" width="1.95" height="1.89" fill="#1a1a1a"/><rect x="928.20" y="337.30" width="1.95" height="1.89" fill="#1a1a1a"/><rect x="928.20" y="340.90" width="1.95" height="1.89" fill="#1a1a1a"/><rect x="928.20" y="344.50" width="1.95" height="1.89" fill="#1a1a1a"/><rect x="930.05" y="335.50" width="1.95" height="1.89" fill="#1a1a1a"/><rect x="930.05" y="339.10" width="1.95" height="1.89" fill="#1a1a1a"/><rect x="930.05" y="342.70" width="1.95" height="1.89" fill="#1a1a1a"/><rect x="930.05" y="346.30" width="1.95" height="1.89" fill="#1a1a1a"/><rect x="931.91" y="333.70" width="1.95" height="1.89" fill="#1a1a1a"/><rect x="931.91" y="337.30" width="1.95" height="1.89" fill="#1a1a1a"/><rect x="931.91" y="340.90" width="1.95" height="1.89" fill="#1a1a1a"/><rect x="931.91" y="344.50" width="1.95" height="1.89" fill="#1a1a1a"/><rect x="933.76" y="335.50" width="1.95" height="1.89" fill="#1a1a1a"/><rect x="933.76" y="339.10" width="1.95" height="1.89" fill="#1a1a1a"/><rect x="933.76" y="342.70" width="1.95" height="1.89" fill="#1a1a1a"/><rect x="933.76" y="346.30" width="1.95" height="1.89" fill="#1a1a1a"/><rect x="935.62" y="333.70" width="1.95" height="1.89" fill="#1a1a1a"/><rect x="935.62" y="337.30" width="1.95" height="1.89" fill="#1a1a1a"/><rect x="935.62" y="340.90" width="1.95" height="1.89" fill="#1a1a1a"/><rect x="935.62" y="344.50" width="1.95" height="1.89" fill="#1a1a1a"/><rect x="937.47" y="335.50" width="1.95" height="1.89" fill="#1a1a1a"/><rect x="937.47" y="339.10" width="1.95" height="1.89" fill="#1a1a1a"/><rect x="937.47" y="342.70" width="1.95" height="1.89" fill="#1a1a1a"/><rect x="937.47" y="346.30" width="1.95" height="1.89" fill="#1a1a1a"/><rect x="939.33" y="333.70" width="1.95" height="1.89" fill="#1a1a1a"/><rect x="939.33" y="337.30" width="1.95" height="1.89" fill="#1a1a1a"/><rect x="939.33" y="340.90" width="1.95" height="1.89" fill="#1a1a1a"/><rect x="939.33" y="344.50" width="1.95" height="1.89" fill="#1a1a1a"/><rect x="941.18" y="335.50" width="1.95" height="1.89" fill="#1a1a1a"/><rect x="941.18" y="339.10" width="1.95" height="1.89" fill="#1a1a1a"/><rect x="941.18" y="342.70" width="1.95" height="1.89" fill="#1a1a1a"/><rect x="941.18" y="346.30" width="1.95" height="1.89" fill="#1a1a1a"/><rect x="943.04" y="333.70" width="1.95" height="1.89" fill="#1a1a1a"/><rect x="943.04" y="337.30" width="1.95" height="1.89" fill="#1a1a1a"/><rect x="943.04" y="340.90" width="1.95" height="1.89" fill="#1a1a1a"/><rect x="943.04" y="344.50" width="1.95" height="1.89" fill="#1a1a1a"/><rect x="944.89" y="335.50" width="1.95" height="1.89" fill="#1a1a1a"/><rect x="944.89" y="339.10" width="1.95" height="1.89" fill="#1a1a1a"/><rect x="944.89" y="342.70" width="1.95" height="1.89" fill="#1a1a1a"/><rect x="944.89" y="346.30" width="1.95" height="1.89" fill="#1a1a1a"/><rect x="946.75" y="333.70" width="1.95" height="1.89" fill="#1a1a1a"/><rect x="946.75" y="337.30" width="1.95" height="1.89" fill="#1a1a1a"/><rect x="946.75" y="340.90" width="1.95" height="1.89" fill="#1a1a1a"/><rect x="946.75" y="344.50" width="1.95" height="1.89" fill="#1a1a1a"/><text x="938.8" y="300.8" font-family="Liberation Sans" font-size="5" fill="#444" text-anchor="middle">UP</text><path d="M937.5 295.3 h2.6" stroke="#aaa" stroke-width="0.5"/></svg>
</body></html>
